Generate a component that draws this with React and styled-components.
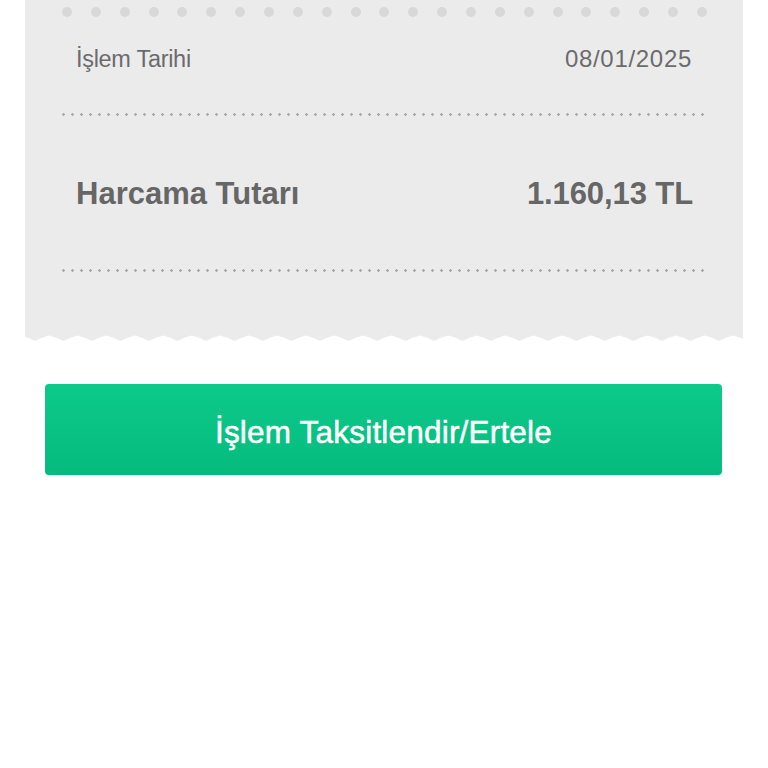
import React from 'react'
import styled, { createGlobalStyle } from 'styled-components'

const GlobalStyle = createGlobalStyle`
  body {
    margin: 0;
    background: #ffffff;
    font-family: 'Liberation Sans', Arial, sans-serif;
  }
`

const Page = styled.div`
  width: 768px;
  height: 768px;
  padding: 0 25px;
  box-sizing: border-box;
  overflow: hidden;
`

const Receipt = styled.div`
  background: #ecebec;
  padding: 7px 36px 63px 37px;
`

const Holes = styled.div`
  display: flex;
  justify-content: space-between;
`

const Hole = styled.span`
  width: 10px;
  height: 10px;
  border-radius: 50%;
  background: #d9d8d9;
`

const Row = styled.div`
  display: flex;
  justify-content: space-between;
  align-items: center;
  padding: ${props => props.pad};
`

const Label = styled.span`
  font-size: ${props => (props.strong ? '31px' : '23.5px')};
  line-height: 32px;
  font-weight: ${props => (props.strong ? 700 : 400)};
  letter-spacing: ${props => (props.strong ? '0' : '-0.3px')};
  color: ${props => (props.strong ? '#666666' : '#6b6b6d')};
`

const Value = styled.span`
  font-size: ${props => (props.strong ? '31px' : '24px')};
  line-height: 32px;
  font-weight: ${props => (props.strong ? 700 : 400)};
  letter-spacing: ${props => (props.strong ? '-0.1px' : '0.7px')};
  color: ${props => (props.strong ? '#666666' : '#6b6b6d')};
  margin-right: ${props => (props.strong ? '0' : '1px')};
`

const Dotted = styled.div`
  height: 3px;
  background-image: radial-gradient(circle at 1.5px 1.5px, #a9a8a9 1.1px, transparent 1.5px);
  background-size: 9px 3px;
  background-repeat: repeat-x;
`

const Edge = styled.svg`
  display: block;
  width: 718px;
  height: 6px;
`

const Action = styled.button`
  display: block;
  width: 677px;
  height: 91px;
  margin: 43px 0 0 20px;
  border: none;
  border-radius: 4px;
  background: linear-gradient(180deg, #0dca8a 0%, #04bb7d 100%);
  color: #ffffff;
  font-family: 'Liberation Sans', Arial, sans-serif;
  font-size: 31.5px;
  letter-spacing: 0.2px;
  -webkit-text-stroke: 0.5px #ffffff;
  padding: 6px 0 0 0;
`

const rows = [
  { label: 'İşlem Tarihi', value: '08/01/2025', pad: '26px 14px 38px 14px' },
  { label: 'Harcama Tutarı', value: '1.160,13 TL', pad: '62px 14px 59px 14px', strong: true }
]

const App = () => (
  <Page>
    <GlobalStyle />
    <Receipt>
      <Holes>
        {Array.from({ length: 23 }).map((_, i) => (
          <Hole key={i} />
        ))}
      </Holes>
      {rows.map(r => (
        <React.Fragment key={r.label}>
          <Row pad={r.pad}>
            <Label strong={r.strong}>{r.label}</Label>
            <Value strong={r.strong}>{r.value}</Value>
          </Row>
          <Dotted />
        </React.Fragment>
      ))}
    </Receipt>
    <Edge viewBox="0 0 718 6" preserveAspectRatio="none">
      <defs>
        <pattern id="zig" x="-4.25" y="0" width="28.5" height="6" patternUnits="userSpaceOnUse">
          <path d="M0 0 L28.5 0 L28.5 0.5 Q21 2.5 15.5 5.4 Q14.25 6 13 5.4 Q7.5 2.5 0 0.5 Z" fill="#ecebec" />
        </pattern>
      </defs>
      <rect x="0" y="0" width="718" height="6" fill="url(#zig)" />
    </Edge>
    <Action>İşlem Taksitlendir/Ertele</Action>
  </Page>
)

export default App
